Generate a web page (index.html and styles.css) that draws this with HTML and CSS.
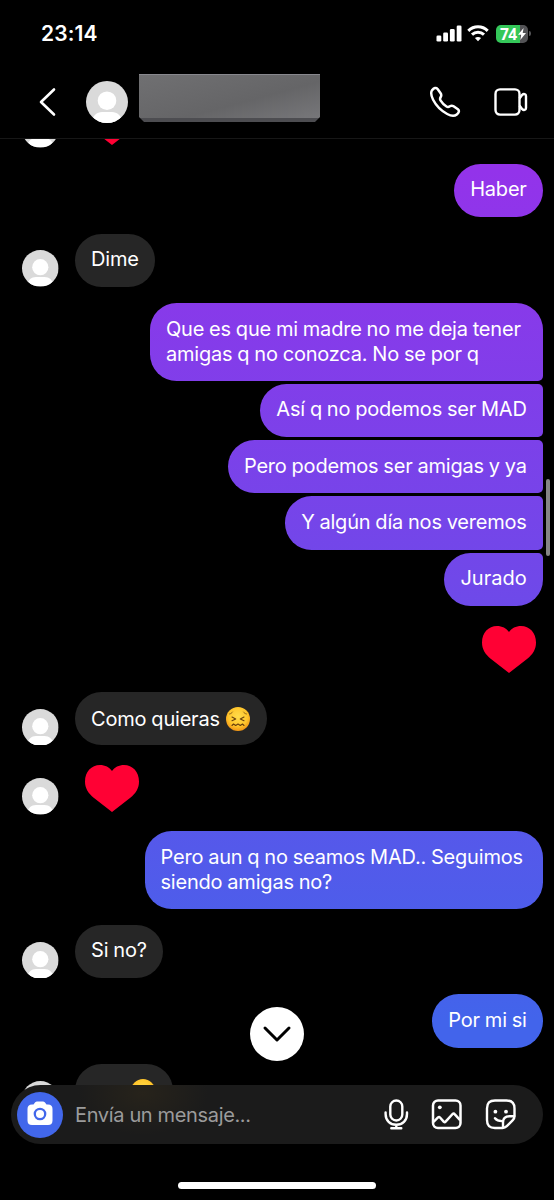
FILE: index.html
```
<!DOCTYPE html>
<html lang="es">
<head>
<meta charset="utf-8">
<title>Chat</title>
<link rel="stylesheet" href="styles.css">
</head>
<body>
<svg class="defs" width="0" height="0">
  <symbol id="avatar" viewBox="0 0 42 42">
    <clipPath id="round"><circle cx="21" cy="21" r="21"/></clipPath>
    <g clip-path="url(#round)"><rect width="42" height="42" fill="#dadada"/><circle cx="21" cy="19.700" r="9.300" fill="#fff"/><path d="M6 42c0-7.500 5-11 10-11h10c5 0 10 3.500 10 11z" fill="#fff"/></g>
  </symbol>
  <symbol id="heart" viewBox="0 0 54 47">
    <path fill="#ff0134" d="M27 47 9 33C3 28.200 0 23 0 16.500 0 6.800 6.500 0 15 0c5 0 9.500 2.300 12 6 2.500-3.700 7-6 12-6 8.500 0 15 6.800 15 16.500 0 6.500-3 11.700-9 16.500z"/>
  </symbol>
  <radialGradient id="face" cx=".5" cy=".4" r=".6"><stop offset="0" stop-color="#ffdc4b"/><stop offset=".65" stop-color="#ffc62c"/><stop offset="1" stop-color="#ef9415"/></radialGradient>
</svg>
<div class="phone">
  <header class="top">
    <div class="status">
      <span class="clock">23:14</span>
      <svg class="signal" width="26" height="18" viewBox="0 0 26 18" fill="#fff"><rect x="0.500" y="10.500" width="4.800" height="6" rx="1.300"/><rect x="7.200" y="7.500" width="4.800" height="9" rx="1.300"/><rect x="13.900" y="4.100" width="4.800" height="12.400" rx="1.300"/><rect x="20.700" y=".5" width="4.800" height="16" rx="1.300"/></svg>
      <svg class="wifi" width="22" height="18" viewBox="0 0 22 18" fill="none" stroke="#fff" stroke-width="3"><path d="M1.300 5.800c5.500-5.300 13.900-5.300 19.400 0"/><path d="M5 9.700c3.400-3.300 8.600-3.300 12 0"/><path d="M11 16.300 7.900 13.100c1.800-1.600 4.400-1.600 6.200 0z" fill="#fff" stroke="none"/></svg>
      <div class="battery"><span>74</span><svg width="8" height="12" viewBox="0 0 8 12" fill="#fff"><path d="M5.600 0 0 6.700h3.200L2.300 12 8 5H4.700z"/></svg></div>
      <i class="nub"></i>
    </div>
    <div class="bar">
      <svg class="back" width="18" height="30" viewBox="0 0 18 30" fill="none" stroke="#fff" stroke-width="2.600" stroke-linecap="round" stroke-linejoin="round"><path d="M15 2.500 2 15 15 27.500"/></svg>
      <svg class="face" width="42" height="42"><use href="#avatar"/></svg>
      <div class="name"></div>
      <svg class="call" width="32" height="32" viewBox="0 0 32 32" fill="none" stroke="#fff" stroke-width="2.500" stroke-linejoin="round"><path d="M3.200 4.100C5 1.900 7 1.200 8.600 3l3 4.300c1 1.500.8 2.600.1 3.700-.8 1.300-1 2.100-.2 3.400 1.500 2.500 3.600 4.600 6 6.100 1.300.8 2.200.6 3.400-.2 1.200-.8 2.300-.9 3.700 0l4.300 3c1.700 1.400 1.100 3.400-1.100 5.200-2.500 2-5.900 1.500-9.600-.5C12.100 24.800 7.300 20 4.100 13.800 2.200 10 1.300 6.600 3.200 4.100z"/></svg>
      <svg class="video" width="34" height="28" viewBox="0 0 34 28" fill="none" stroke="#fff" stroke-width="2.400" stroke-linejoin="round"><rect x="1.500" y="1.400" width="24" height="25.200" rx="4.500"/><path d="M25.500 10.500 28.200 6.800c1.500-1.500 3.800-.9 3.800 1.200v12c0 2.100-2.300 2.700-3.800 1.200l-2.700-3.700"/></svg>
    </div>
  </header>
  <main class="chat">
    <div class="row in"><svg class="pic"><use href="#avatar"/></svg><svg class="heart"><use href="#heart"/></svg></div>
    <div class="row out"><p class="bubble">Haber</p></div>
    <div class="row in"><svg class="pic"><use href="#avatar"/></svg><p class="bubble">Dime</p></div>
    <div class="group">
      <p class="bubble tall first">Que es que mi madre no me deja tener<br>amigas q no conozca. No se por q</p>
      <p class="bubble">Así q no podemos ser MAD</p>
      <p class="bubble">Pero podemos ser amigas y ya</p>
      <p class="bubble">Y algún día nos veremos</p>
      <p class="bubble short">Jurado</p>
    </div>
    <div class="row out"><svg class="heart"><use href="#heart"/></svg></div>
    <div class="row in"><svg class="pic"><use href="#avatar"/></svg><p class="bubble with-emoji">Como quieras<svg class="emoji" viewBox="0 0 24 24" role="img" aria-label="😖"><circle cx="12" cy="12" r="12" fill="url(#face)"/><g fill="none" stroke="#69400e" stroke-width="1.100" stroke-linecap="round" stroke-linejoin="round"><path d="M6.500 5c-.8 1.200-1.700 1.800-3 2M17.500 5c.8 1.200 1.700 1.800 3 2" stroke-width=".7"/><path d="m6 10 3.700 1.900L6 13.800M18 10l-3.700 1.900 3.700 1.900"/><path d="m6 18.500 1.500-1.500 2.200 1.500 2.300-1.500 2.300 1.500 2.200-1.500 1.500 1.500"/></g></svg></p></div>
    <div class="row in"><svg class="pic"><use href="#avatar"/></svg><svg class="heart"><use href="#heart"/></svg></div>
    <div class="row out"><p class="bubble tall question">Pero aun q no seamos MAD.. Seguimos<br>siendo amigas no?</p></div>
    <div class="row in"><svg class="pic"><use href="#avatar"/></svg><p class="bubble">Si no?</p></div>
    <div class="row out"><p class="bubble">Por mi si</p></div>
    <div class="row in"><svg class="pic"><use href="#avatar"/></svg><p class="bubble with-emoji last">asi<svg class="emoji" viewBox="0 0 24 24"><circle cx="12" cy="12" r="12" fill="url(#face)"/></svg></p></div>
  </main>
  <i class="scrollbar"></i>
  <div class="jump"><svg width="30" height="18" viewBox="0 0 30 18" fill="none" stroke="#000" stroke-width="3" stroke-linecap="round" stroke-linejoin="round"><path d="M3 3 15 15 27 3"/></svg></div>
  <footer class="composer">
    <div class="camera"><svg width="26" height="25" viewBox="0 0 26 25"><path fill="#fff" d="M5 3.500h1.500L8 1.500C8.800.600 9.500.500 10.500.500h5c1 0 1.700.1 2.500 1l1.500 2H21c3 0 4.500 1.500 4.500 4.500v11.500c0 3-1.500 4.500-4.500 4.500H5c-3 0-4.500-1.500-4.500-4.500V8c0-3 1.500-4.500 4.500-4.500z"/><circle cx="13" cy="13" r="5.200" fill="none" stroke="#4267eb" stroke-width="2.300"/></svg></div>
    <span class="hint">Envía un mensaje...</span>
    <svg class="mic" width="26" height="32" viewBox="0 0 26 32" fill="none" stroke="#fff" stroke-width="2.400" stroke-linecap="round"><rect x="7.300" y="1.500" width="12" height="20" rx="6"/><path d="M2.600 13.500V15c0 6.500 4.500 10.800 10.700 10.800S24 21.500 24 15v-1.500M13.300 26v3M8.300 29.300h10"/></svg>
    <svg class="photo" width="32" height="32" viewBox="0 0 32 32" fill="none" stroke="#fff" stroke-width="2.500" stroke-linejoin="round"><rect x="2" y="1.500" width="27.500" height="27.500" rx="5"/><circle cx="8.800" cy="8.300" r="1.900" fill="#fff" stroke="none"/><path d="M2.500 23 7 18.400c.8-.7 1.400-.6 2 .1l3.900 4.300c.6.500 1.200.4 1.700-.1l7-7.700c.8-.7 1.400-.6 2 .1l5.500 6"/></svg>
    <svg class="sticker" width="32" height="32" viewBox="0 0 32 32" fill="none" stroke="#fff" stroke-width="2.400" stroke-linecap="round" stroke-linejoin="round"><path d="M10 1.500h11.500c5.500 0 8 2.500 8 8V17c0 2-.5 3-1.700 4.200l-6 6c-1.200 1.200-2.200 1.800-4.300 1.800H10c-5.500 0-8-2.500-8-8V9.500c0-5.500 2.500-8 8-8z"/><path d="M18 28.500v-5c0-4.500 2-6.300 6.500-6.300h4.700M10 19.300c1.500 2 3.500 2.800 7 2.800"/><g fill="#fff" stroke="none"><circle cx="10.400" cy="12.700" r="1.900"/><circle cx="21" cy="12.700" r="1.900"/></g></svg>
  </footer>
  <i class="home"></i>
</div>
</body>
</html>
```
FILE: styles.css
```
* { box-sizing: border-box; }
body { margin: 0; background: #000; color: #fff; font-family: Inter, "Liberation Sans", sans-serif; }
svg { display: block; flex: none; }
.defs { position: absolute; }
.phone { position: relative; display: flex; flex-direction: column; width: 554px; height: 1200px; overflow: hidden; }
.top { height: 139px; flex: none; border-bottom: 1.5px solid #171717; }
.status { display: flex; align-items: center; height: 67px; padding: 0 23px 0 41px; }
.clock { flex: 1; font-size: 21px; font-weight: 600; letter-spacing: .1px; }
.wifi { margin: 0 7px 0 5px; }
.battery { display: flex; align-items: center; gap: 1px; width: 32px; height: 18px; padding-left: 4px; border-radius: 5px; background: linear-gradient(90deg, #34c759 24px, #535356 24px); font-family: "Open Sans", sans-serif; font-size: 15.500px; font-weight: 700; letter-spacing: -.6px; }
.nub { width: 2px; height: 5px; margin-left: 1px; border-radius: 0 2px 2px 0; background: #535356; }
.bar { display: flex; align-items: center; height: 69px; padding: 0 26px 0 39px; }
.face { margin-left: 29px; }
.name { width: 181px; height: 48px; margin: -7px 109px 0 11px; background: linear-gradient(165deg, #707072, #656567 60%, #77777a); border-top: 1px solid #88888e; border-bottom: 4px solid #4d4d51; clip-path: polygon(0 0, 100% 0, 100% 43px, 176px 100%, 5px 100%, 0 43px); }
.video { margin-left: 33px; }
.chat { display: flex; flex-direction: column; flex: none; gap: 16.2px; height: 1061px; padding: 0 11px 0 22px; overflow: hidden; }
.chat > :first-child { margin-top: -44.6px; }
.row { display: flex; flex: none; align-items: flex-end; }
.out { justify-content: flex-end; }
.group { display: flex; flex: none; flex-direction: column; align-items: flex-end; gap: 3px; }
.pic { width: 36.6px; height: 36.6px; margin-right: 16.500px; }
.heart { width: 54px; height: 47px; margin: 3.400px 10px 3px; }
.out .heart { margin-right: 7px; }
.bubble { height: 53.4px; margin: 0; padding: 13.5px 16.3px 0 16px; border-radius: 26.7px; font-size: 20px; line-height: 25.3px; letter-spacing: -.2px; word-spacing: -.5px; white-space: nowrap; background: linear-gradient(#9b30ea 0, #9333ea 170px, #7048e9 580px, #4264eb 1020px) fixed; }
.in .bubble { background: #262626; }
.tall { height: 77.5px; }
.first { width: 393px; }
.question { width: 398.500px; }
.short { letter-spacing: 0; }
.group .bubble { border-radius: 26.7px 5px 5px 26.7px; }
.group .bubble:first-child { border-top-right-radius: 26.7px; }
.group .bubble:last-child { border-bottom-right-radius: 26.7px; }
.in .with-emoji { display: flex; padding-top: 15.5px; }
.emoji { width: 24px; height: 24px; margin: -.5px 0 0 6.500px; }
.in .last { width: 98px; padding-top: 18px; }
.last .emoji { margin: -3px 0 0 13.500px; }
.scrollbar { position: absolute; left: 546px; top: 479px; width: 4px; height: 77px; border-radius: 2px; background: #858585; }
.jump { position: absolute; left: 250px; top: 1007px; display: flex; align-items: center; justify-content: center; width: 54px; height: 54px; border-radius: 50%; background: #fff; }
.composer { position: absolute; left: 11px; top: 1085px; display: flex; align-items: center; width: 532px; height: 59px; padding: 0 26px 0 6px; border-radius: 29.5px; background: radial-gradient(ellipse 65px 42px at 132px 8px, #27231b, transparent), #1b1b1b; }
.camera { display: flex; align-items: center; justify-content: center; width: 46px; height: 46px; padding-bottom: 2px; border-radius: 50%; background: #4267eb; }
.hint { flex: 1; margin-left: 12px; font-size: 20px; letter-spacing: -.35px; color: #9b9b9b; }
.photo { margin: 0 22px; }
.home { position: absolute; left: 178px; top: 1182px; width: 198px; height: 7px; border-radius: 4px; background: #fff; }
```
